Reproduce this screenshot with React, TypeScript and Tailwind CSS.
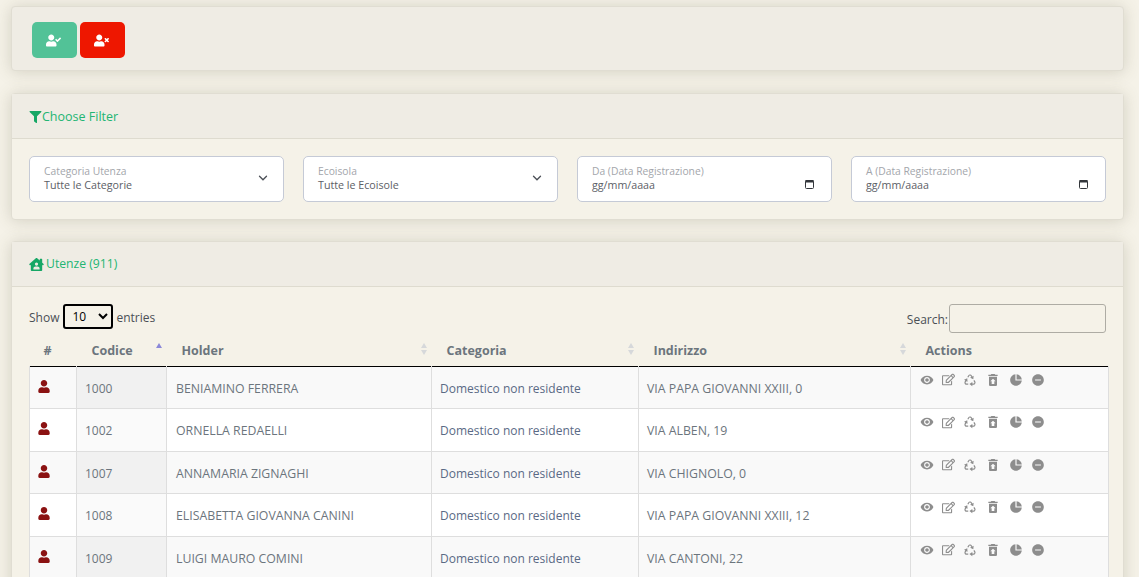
import { FaFilter, FaHouseUser, FaRegEdit, FaUser, FaUserCheck, FaUserTimes } from "react-icons/fa";
import { MdRemoveRedEye, MdRestoreFromTrash } from "react-icons/md";
import { RiIndeterminateCircleFill, RiPieChartFill, RiRecycleLine } from "react-icons/ri";

interface Utenza {
  codice: string;
  holder: string;
  categoria: string;
  indirizzo: string;
}

const rows: Utenza[] = [
  { codice: "1000", holder: "BENIAMINO FERRERA", categoria: "Domestico non residente", indirizzo: "VIA PAPA GIOVANNI XXIII, 0" },
  { codice: "1002", holder: "ORNELLA REDAELLI", categoria: "Domestico non residente", indirizzo: "VIA ALBEN, 19" },
  { codice: "1007", holder: "ANNAMARIA ZIGNAGHI", categoria: "Domestico non residente", indirizzo: "VIA CHIGNOLO, 0" },
  { codice: "1008", holder: "ELISABETTA GIOVANNA CANINI", categoria: "Domestico non residente", indirizzo: "VIA PAPA GIOVANNI XXIII, 12" },
  { codice: "1009", holder: "LUIGI MAURO COMINI", categoria: "Domestico non residente", indirizzo: "VIA CANTONI, 22" },
];

const SortArrows = ({ active }: { active?: boolean }) => (
  <span className="absolute right-[5px] top-[9px] flex flex-col gap-[2px]">
    <span className={`h-0 w-0 border-x-[3.5px] border-b-[5px] border-x-transparent ${active ? "border-b-[#8b88d8]" : "border-b-[#d6d8da]"}`} />
    <span className={`h-0 w-0 border-x-[3.5px] border-t-[5px] border-x-transparent ${active ? "border-t-transparent" : "border-t-[#d6d8da]"}`} />
  </span>
);

const FilterBox = ({ label, value, kind }: { label: string; value: string; kind: "select" | "date" }) => (
  <div className="relative h-[46px] flex-1 rounded-[5px] border border-[#c5cad6] bg-white pl-[14px] pt-[8px]">
    <div className="text-[10.3px] leading-[13px] text-[#a3a6ab]">{label}</div>
    <div className="text-[10.7px] leading-[15px] text-[#5c6066]">{value}</div>
    {kind === "select" ? (
      <svg className="absolute right-[15px] top-[18px] h-[7px] w-[10px]" viewBox="0 0 11 8" fill="none">
        <path d="M1.5 1.5 5.5 5.5 9.5 1.5" stroke="#4b4f56" strokeWidth="1.5" strokeLinecap="round" />
      </svg>
    ) : (
      <svg className="absolute right-[17px] top-[22px] h-[10px] w-[9px]" viewBox="0 0 9 10" fill="none">
        <rect x="0.5" y="1.5" width="8" height="8" rx="1" stroke="#33363b" />
        <rect x="0.5" y="1" width="8" height="2.5" fill="#33363b" />
      </svg>
    )}
  </div>
);

const ActionIcons = () => (
  <div className="flex items-center gap-[8px] pt-[5px] pl-[9px] text-[#8d8d8d]">
    <MdRemoveRedEye className="h-[14px] w-[14px]" />
    <FaRegEdit className="h-[13px] w-[13px]" />
    <RiRecycleLine className="h-[14px] w-[14px]" />
    <MdRestoreFromTrash className="h-[16px] w-[16px]" />
    <RiPieChartFill className="h-[14px] w-[14px]" />
    <RiIndeterminateCircleFill className="h-[14px] w-[14px]" />
  </div>
);

export default function App() {
  return (
    <div className="h-[577px] overflow-hidden bg-[#f5f2e8] pl-[11px] pr-[15px] pt-[6px] font-['Open_Sans',sans-serif] text-[12px] text-[#6c757d]">
      {/* Toolbar card */}
      <div className="h-[65px] rounded-[4px] border border-[#e0ddd2] bg-[#efece4] pl-[20px] pt-[15px] shadow-[0_1px_16px_rgba(90,85,60,0.22)]">
        <div className="flex gap-[3px]">
          <button className="flex h-[36px] w-[45px] items-center justify-center rounded-[5px] bg-[#52c297] pr-[2px] text-white">
            <FaUserCheck className="h-[13px] w-[15px]" />
          </button>
          <button className="flex h-[36px] w-[45px] items-center justify-center rounded-[5px] bg-[#ee1700] pr-[2px] text-white">
            <FaUserTimes className="h-[13px] w-[15px]" />
          </button>
        </div>
      </div>

      {/* Filter card */}
      <div className="mt-[22px] h-[127px] rounded-[4px] border border-[#e0ddd2] bg-[#f5f2e8] shadow-[0_1px_16px_rgba(90,85,60,0.22)]">
        <div className="flex h-[45px] items-center border-b border-[#dedbcf] bg-[#efece4] pl-[17px] pt-[2px] text-[12.5px] font-medium text-[#22b573]">
          <FaFilter className="h-[12px] w-[13px] text-[#16a765]" />
          <span>Choose Filter</span>
        </div>
        <div className="flex gap-[19px] px-[17px] pt-[17px]">
          <FilterBox label="Categoria Utenza" value="Tutte le Categorie" kind="select" />
          <FilterBox label="Ecoisola" value="Tutte le Ecoisole" kind="select" />
          <FilterBox label="Da (Data Registrazione)" value="gg/mm/aaaa" kind="date" />
          <FilterBox label="A (Data Registrazione)" value="gg/mm/aaaa" kind="date" />
        </div>
      </div>

      {/* Utenze card */}
      <div className="mt-[21px] h-[400px] rounded-[4px] border border-[#e0ddd2] bg-[#f5f2e8] shadow-[0_1px_16px_rgba(90,85,60,0.22)]">
        <div className="flex h-[45px] items-center gap-[2px] border-b border-[#dedbcf] bg-[#efece4] pl-[17px] text-[12.5px] font-medium text-[#22b573]">
          <FaHouseUser className="h-[13px] w-[15px] text-[#16a765]" />
          <span className="text-[12.2px]">Utenze (911)</span>
        </div>
        <div className="pl-[17px] pr-[15px]">
          <div className="flex h-[47px] items-start justify-between pr-[2px] pt-[17px] text-[#4a4f55]">
            <div className="flex items-center gap-[3px]">
              <span className="pr-[1px] pt-[2px]">Show</span>
              <select defaultValue="10" className="h-[25px] w-[50px] rounded-[3px] border-2 border-black bg-transparent pl-[3px] text-[12px] text-black">
                <option>10</option>
                <option>25</option>
                <option>50</option>
              </select>
              <span className="pt-[2px]">entries</span>
            </div>
            <div className="flex items-center gap-[1px]">
              <span className="pt-[2px]">Search:</span>
              <input className="h-[29px] w-[157px] rounded-[3px] border border-[#aeaca4] bg-transparent" />
            </div>
          </div>
          <table className="w-[1079px] table-fixed border-collapse">
            <colgroup>
              <col className="w-[47px]" />
              <col className="w-[90px]" />
              <col className="w-[265px]" />
              <col className="w-[207px]" />
              <col className="w-[272px]" />
              <col className="w-[198px]" />
            </colgroup>
            <thead>
              <tr className="h-[32px] border-b-[1.5px] border-black text-left text-[12.5px] font-bold text-[#6c757d]">
                <th className="relative pl-[14px] pt-[3px] font-bold">#</th>
                <th className="relative pl-[15px] pt-[3px] font-bold">Codice<SortArrows active /></th>
                <th className="relative pl-[15px] pt-[3px] font-bold">Holder<SortArrows /></th>
                <th className="relative pl-[15px] pt-[3px] font-bold">Categoria<SortArrows /></th>
                <th className="relative pl-[15px] pt-[3px] font-bold">Indirizzo<SortArrows /></th>
                <th className="relative pl-[15px] pt-[3px] font-bold">Actions</th>
              </tr>
            </thead>
            <tbody>
              {rows.map((row, index) => (
                <tr key={row.codice} className={`h-[42.5px] border-b border-[#dedede] ${index % 2 === 0 ? "bg-[#f9f9f9]" : "bg-white"}`}>
                  <td className="border-x border-[#dedede] pl-[8px] align-top">
                    <FaUser className="mt-[13px] h-[13px] w-[12px] text-[#8b1212]" />
                  </td>
                  <td className={`border-r border-[#dedede] pl-[8px] pt-[3px] ${index % 2 === 0 ? "bg-[#f1f1f1]" : "bg-[#fafafa]"}`}>{row.codice}</td>
                  <td className="border-r border-[#dedede] pl-[9px] pt-[3px] text-[12.3px]">{row.holder}</td>
                  <td className="border-r border-[#dedede] pl-[8px] pt-[3px] text-[#5a6a85]">{row.categoria}</td>
                  <td className="border-r border-[#dedede] pl-[8px] pt-[3px] text-[12.3px]">{row.indirizzo}</td>
                  <td className="border-r border-[#dedede] align-top"><ActionIcons /></td>
                </tr>
              ))}
            </tbody>
          </table>
        </div>
      </div>
    </div>
  );
}
